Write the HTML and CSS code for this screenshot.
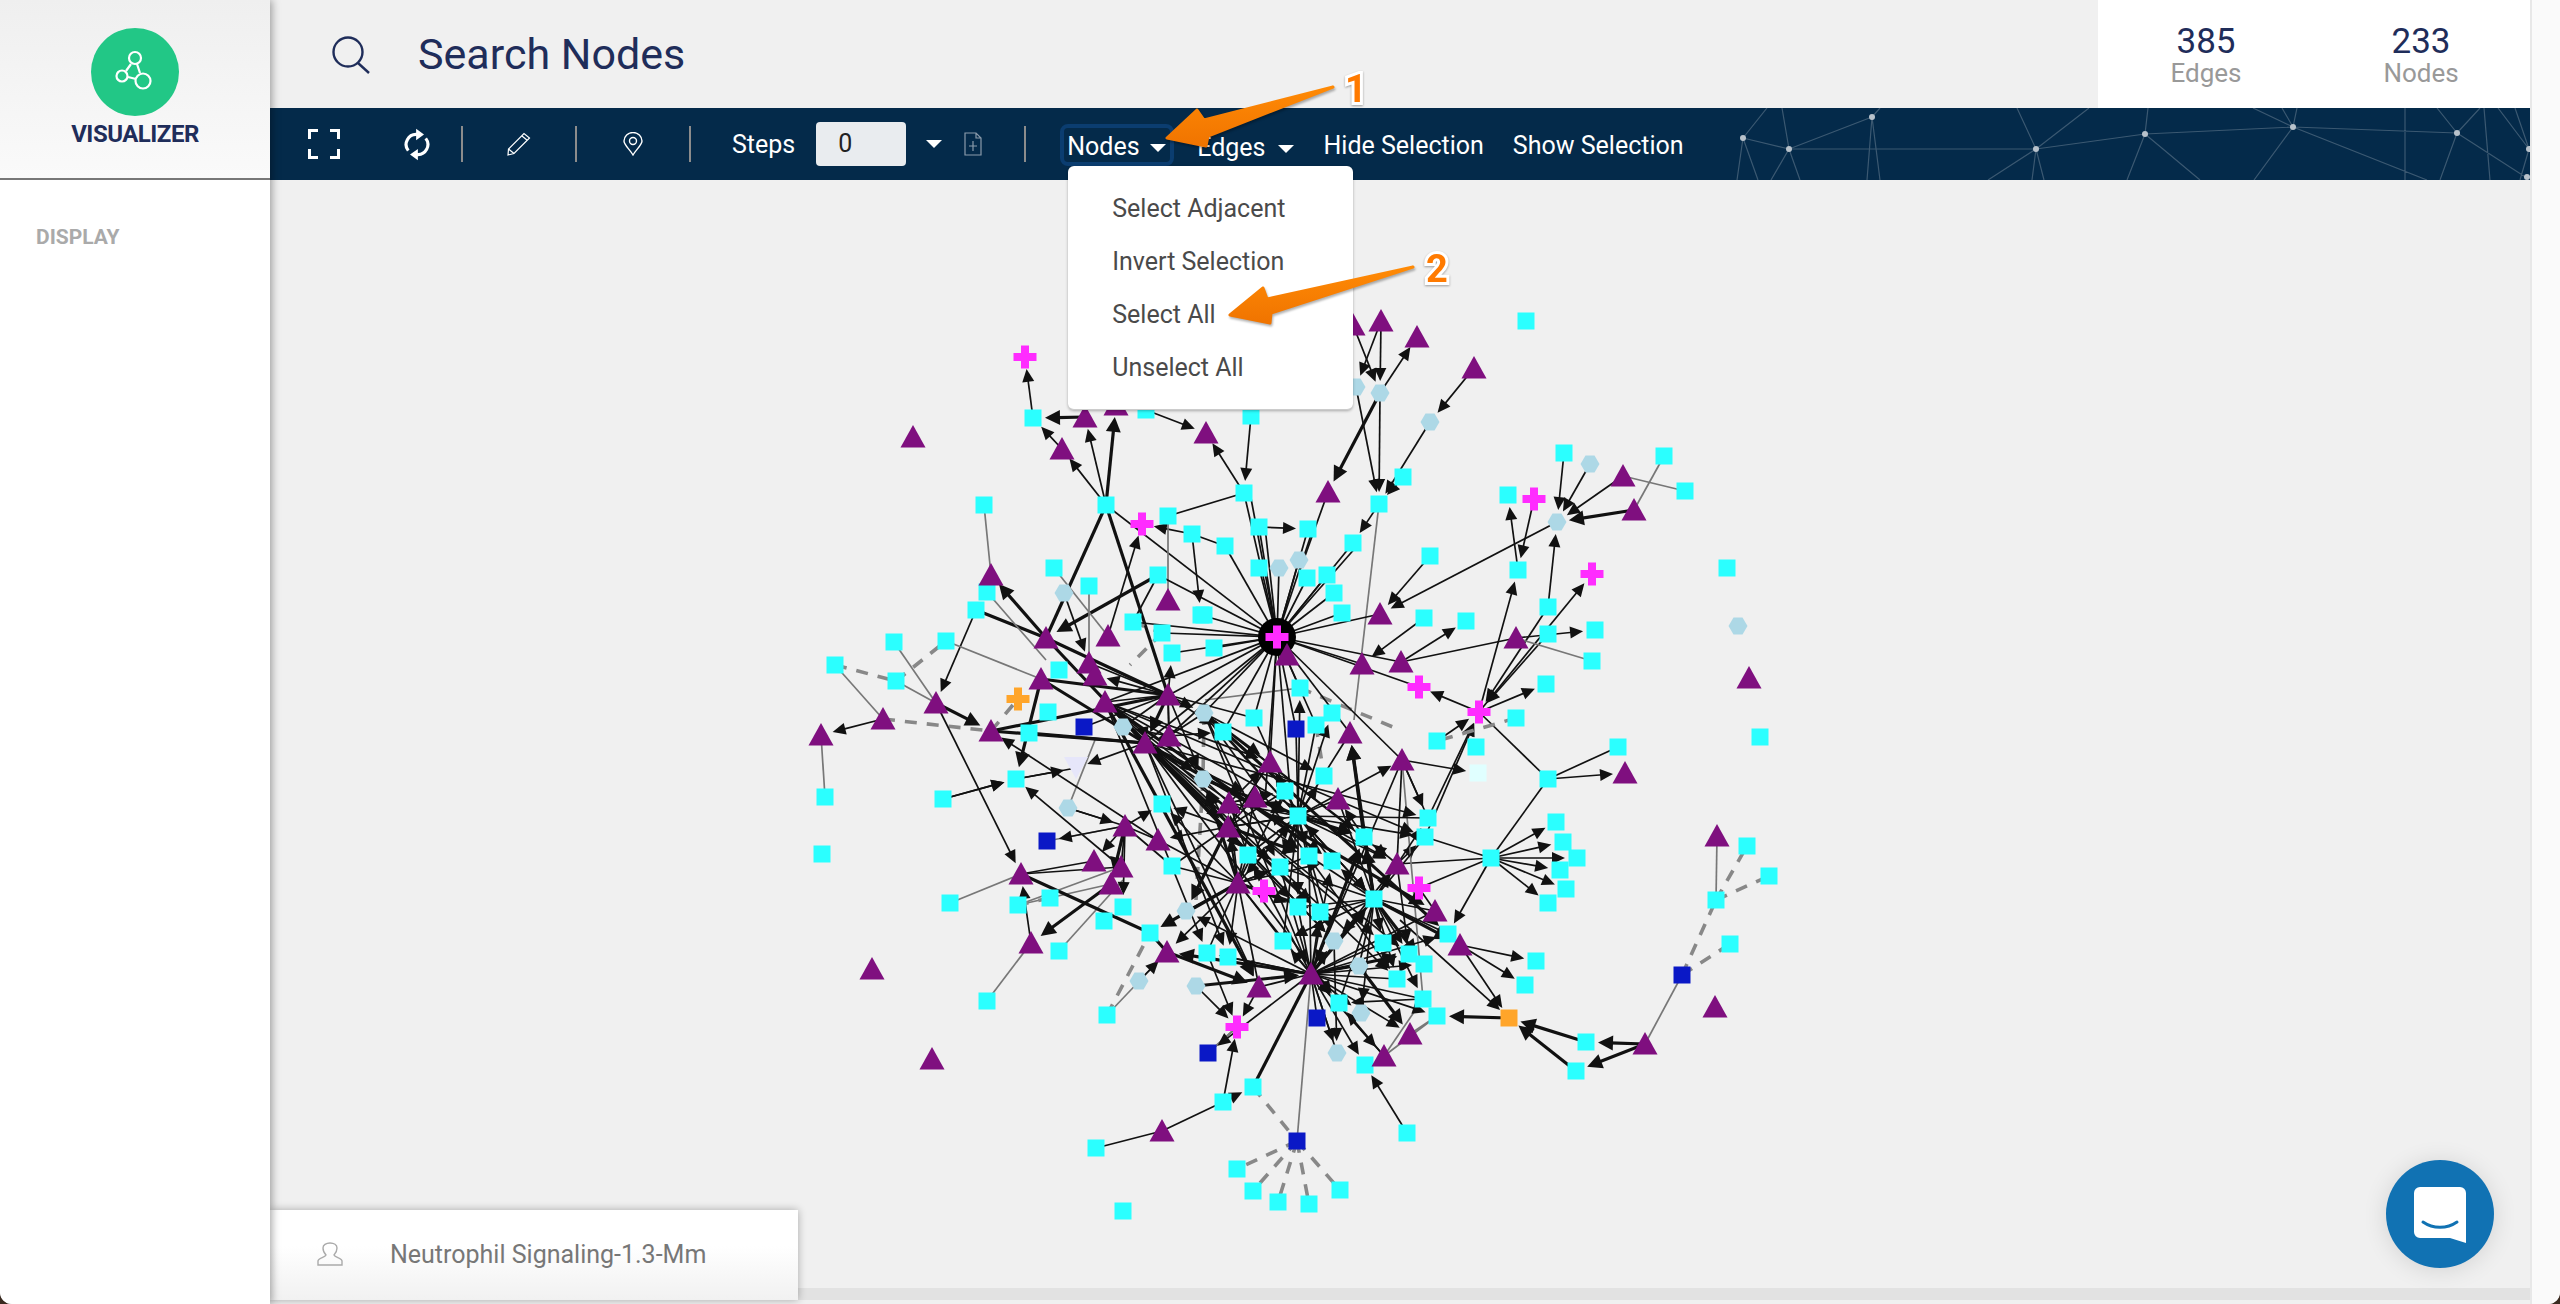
FILE: index.html
```html
<!doctype html>
<html lang="en">
<head>
    <meta charset="utf-8">
    <title>Visualizer</title>
    <link rel="stylesheet" href="styles.css">
</head>
<body>
    <div class="app">
        <aside class="sidebar">
            <div class="brand">
                <div class="brand-logo">
                    <svg viewBox="0 0 88 88" width="88" height="88">
                        <g fill="none" stroke="#fff" stroke-width="2.2">
                            <circle cx="44" cy="30" r="6"/>
                            <circle cx="31" cy="48" r="5.5"/>
                            <circle cx="52" cy="53" r="7.5"/>
                            <path d="M40 36l-5 7M46 36l3 9M37 49l8 2"/>
                        </g>
                    </svg>
                </div>
                <div class="brand-name">VISUALIZER</div>
            </div>
            <div class="side-title">DISPLAY</div>
        </aside>

        <main class="main">
            <header class="topbar">
                <svg class="search-icon" viewBox="0 0 40 38" width="40" height="38">
                    <circle cx="16" cy="16" r="14.5" fill="none" stroke="#1f2d5a" stroke-width="2.4"/>
                    <path d="M26 27l11 10" stroke="#1f2d5a" stroke-width="2.4"/>
                </svg>
                <div class="search-label">Search Nodes</div>
                <div class="stats">
                    <div class="stat"><span class="stat-num">385</span><span class="stat-name">Edges</span></div>
                    <div class="stat"><span class="stat-num">233</span><span class="stat-name">Nodes</span></div>
                </div>
            </header>

            <nav class="toolbar">
                <svg class="toolbar-bg" viewBox="1730 108 800 72" width="800" height="72">
                    <path fill="none" stroke="#fff" stroke-opacity=".22" stroke-width="1.2" d="M1743 138L1789 149M1789 149L1872 117M1789 149H2036M2036 149L2145 134M2145 134L2293 127M2293 127L2457 133M2293 127L2427 180M2457 133L2527 178M1743 138L1737 180M1743 138L1758 180M1743 138L1767 108M1789 149L1771 180M1789 149L1800 180M1789 149L1782 108M1872 117L1867 180M1872 117L1880 180M1872 117L1880 108M2036 149L1988 180M2036 149L2032 180M2036 149L2044 180M2036 149L2017 108M2036 149L2089 108M2145 134L2127 180M2145 134L2200 180M2145 134L2148 108M2293 127L2254 180M2293 127L2282 108M2293 127L2253 108M2293 127L2297 108M2457 133L2440 180M2457 133L2437 108M2457 133L2480 108M2405 108V180M2484 108L2490 180M2529 149L2498 108M2529 149L2515 108M2529 149L2520 180"/>
                    <g fill="#b8c2cb">
                        <circle cx="1743" cy="138" r="3"/><circle cx="1789" cy="149" r="3"/>
                        <circle cx="1872" cy="117" r="3"/><circle cx="2036" cy="149" r="3"/>
                        <circle cx="2145" cy="134" r="3"/><circle cx="2293" cy="127" r="3"/>
                        <circle cx="2457" cy="133" r="3"/><circle cx="2529" cy="149" r="3"/>
                        <circle cx="2527" cy="177" r="3"/>
                    </g>
                </svg>

                <svg class="tool tool-full" viewBox="0 0 32 30" width="32" height="30">
                    <path fill="none" stroke="#fff" stroke-width="3" d="M10 1.5H1.5V10M22 1.5H30.500V10M1.500 20V28.500H10M30.500 20V28.500H22"/>
                </svg>
                <svg class="tool tool-refresh" viewBox="0 0 32 36" width="28" height="33">
                    <path fill="none" stroke="#fff" stroke-width="3.6" d="M6 25A11.500 11.500 0 0 1 16 6.500M26 11A11.500 11.500 0 0 1 16 29.500"/>
                    <path fill="#fff" d="M15 0l9 6.500-9 6.500zM17 23l-9 6.500 9 6.500z"/>
                </svg>
                <span class="sep sep-a"></span>
                <svg class="tool tool-pencil" viewBox="0 0 24 24" width="24" height="24">
                    <path fill="none" stroke="#fff" stroke-width="1.200" d="M1 23l.5-6L17 1.500 22.500 6 7 21.500zM15 4l5.500 4.500M1.500 17L7 21.500"/>
                </svg>
                <span class="sep sep-b"></span>
                <svg class="tool tool-pin" viewBox="0 0 20 24" width="20" height="24">
                    <path fill="none" stroke="#fff" stroke-width="1.400" d="M10 23C6.500 17 1 13 1 9a9 8.500 0 0 1 18 0c0 4-5.500 8-9 14z"/>
                    <circle cx="10" cy="9" r="3.500" fill="none" stroke="#fff" stroke-width="1.400"/>
                </svg>
                <span class="sep sep-c"></span>

                <span class="tool-text steps-label">Steps</span>
                <div class="steps-input">0</div>
                <span class="caret caret-steps"></span>
                <svg class="tool tool-doc" viewBox="0 0 18 24" width="18" height="24">
                    <path fill="none" stroke="#8b9bab" stroke-width="1.200" d="M1 1h11l5 5v17H1zM12 1v5h5M9 9v10M5 14h8"/>
                </svg>
                <span class="sep sep-d"></span>

                <div class="dropdown">
                    <button class="drop-btn">Nodes<span class="caret"></span></button>
                    <ul class="menu">
                        <li>Select Adjacent</li>
                        <li>Invert Selection</li>
                        <li>Select All</li>
                        <li>Unselect All</li>
                    </ul>
                </div>
                <span class="tool-text edges-label">Edges<span class="caret"></span></span>
                <span class="tool-text hide-label">Hide Selection</span>
                <span class="tool-text show-label">Show Selection</span>
            </nav>

            <section class="canvas">
                <svg id="graph" class="graph" viewBox="270 180 2260 1108" width="2260" height="1108"></svg>
                <div class="network-name">
                    <svg viewBox="0 0 26 24" width="26" height="24">
                        <path fill="none" stroke="#aaa" stroke-width="1.400" d="M1 23v-4c0-3 7-3.500 8-6-2-2-3-4-3-7 0-3 3-5 7-5s7 2 7 5c0 3-1 5-3 7 1 2.500 8 3 8 6v4z"/>
                    </svg>
                    <span>Neutrophil Signaling-1.3-Mm</span>
                </div>
                <div class="scroll-strip"></div>
                <div class="chat-btn">
                    <svg viewBox="0 0 52 56" width="52" height="56">
                        <path fill="#fff" d="M6 0h40a6 6 0 0 1 6 6v50l-16-5H6a6 6 0 0 1-6-6V6a6 6 0 0 1 6-6z"/>
                        <path fill="none" stroke="#1172b3" stroke-width="3" stroke-linecap="round" d="M9 35c10 7 24 7 34 0"/>
                    </svg>
                </div>
            </section>
        </main>
        <div class="right-strip"></div>
    </div>

    <svg class="callouts" viewBox="0 0 2560 1304" width="2560" height="1304">
        <defs>
            <linearGradient id="orange" x1="0" y1="0" x2="0" y2="1">
                <stop offset="0" stop-color="#ff8a05"/>
                <stop offset="1" stop-color="#f07400"/>
            </linearGradient>
        </defs>
        <path class="callout-arrow" d="M1333 87L1204 120 1197 110 1167 138 1206 146 1208 136z"/>
        <path class="callout-arrow" d="M1413 267L1267 299 1263 288 1230 315 1270 323 1271 313z"/>
        <text class="callout-num" x="1356" y="102">1</text>
        <text class="callout-num" x="1437" y="282">2</text>
    </svg>

    <script src="graph.js"></script>
</body>
</html>
```

FILE: styles.css
```css
* {
    box-sizing: border-box;
}

html, body {
    margin: 0;
    height: 100%;
    overflow: hidden;
}

body {
    width: 2560px;
    height: 1304px;
    background-color: #3a2a20;
    font-family: Roboto, 'Noto Sans', sans-serif;
}

.app {
    display: flex;
    width: 2560px;
    height: 1304px;
    background-color: #f0f0f0;
    border-radius: 0 0 12px 12px;
    overflow: hidden;
}

/* sidebar */
.sidebar {
    flex: none;
    width: 270px;
    background-color: #fff;
    box-shadow: 2px 0 8px rgba(0, 0, 0, .35);
    z-index: 3;
}

.brand {
    display: flex;
    flex-direction: column;
    align-items: center;
    height: 180px;
    padding-top: 28px;
    background: linear-gradient(#efefef, #fafafa);
    border-bottom: 2px solid #777;
}

.brand-logo {
    width: 88px;
    height: 88px;
    border-radius: 50%;
    background-color: #22c786;
}

.brand-name {
    margin-top: 4px;
    color: #1f2d5a;
    font-size: 24px;
    font-weight: 700;
    line-height: 28px;
    letter-spacing: -.5px;
}

.side-title {
    padding: 45px 0 0 36px;
    color: #aaa;
    font-size: 21px;
    font-weight: 700;
    line-height: 24px;
}

/* main column */
.main {
    display: flex;
    flex: none;
    flex-direction: column;
    width: 2260px;
}

.topbar {
    display: flex;
    flex: none;
    align-items: center;
    height: 108px;
    padding-left: 62px;
}

.search-icon {
    flex: none;
    margin-top: 2px;
}

.search-label {
    margin-left: 46px;
    color: #1f2d5a;
    font-size: 43px;
}

.stats {
    display: flex;
    justify-content: space-between;
    width: 432px;
    height: 108px;
    margin-left: auto;
    padding: 0 44px 0 43px;
    background-color: #fff;
}

.stat {
    display: flex;
    flex-direction: column;
    align-items: center;
    width: 130px;
    padding-top: 26px;
}

.stat-num {
    color: #1f2d5a;
    font-size: 35px;
    line-height: 32px;
}

.stat-name {
    color: #999;
    font-size: 26px;
    line-height: 30px;
}

/* toolbar */
.toolbar {
    display: flex;
    position: relative;
    flex: none;
    align-items: center;
    height: 72px;
    padding-left: 38px;
    background-color: #042a4a;
    color: #fff;
    z-index: 2;
}

.toolbar-bg {
    position: absolute;
    top: 0;
    right: 0;
}

.tool {
    flex: none;
}

.tool-refresh { margin-left: 63px; }
.tool-pencil { margin-left: 44px; }
.tool-pin { margin-left: 46px; }
.tool-doc { margin-left: 22px; }

.sep {
    flex: none;
    width: 2px;
    height: 36px;
    background-color: #8c8c8c;
}

.sep-a { margin-left: 30px; }
.sep-b { margin-left: 44px; }
.sep-c { margin-left: 46px; }
.sep-d { margin-left: 42px; }

.tool-text {
    font-size: 25px;
    white-space: nowrap;
}

.steps-label { margin-left: 41px; }

.steps-input {
    flex: none;
    width: 90px;
    height: 44px;
    margin-left: 21px;
    padding-left: 22px;
    background-color: #e9ecef;
    border-radius: 4px;
    color: #222;
    font-size: 25px;
    line-height: 44px;
}

.caret {
    display: inline-block;
    width: 0;
    height: 0;
    margin-left: 12px;
    border-top: 8px solid #fff;
    border-left: 8px solid transparent;
    border-right: 8px solid transparent;
    vertical-align: 3px;
}

.caret-steps { margin-left: 20px; }

.dropdown {
    position: relative;
    flex: none;
    margin: 2px 0 0 34px;
}

.drop-btn {
    display: block;
    width: 114px;
    height: 42px;
    padding: 4px 0 0 3px;
    background: none;
    border: 4px solid #0b3d70;
    border-radius: 8px;
    color: #fff;
    font-family: inherit;
    font-size: 25px;
    line-height: 30px;
    text-align: left;
    white-space: nowrap;
}

.drop-btn .caret {
    margin-left: 10px;
}

.menu {
    position: absolute;
    top: 100%;
    left: 8px;
    width: 285px;
    margin: 0;
    padding: 16px 0 15px;
    background-color: #fff;
    border-bottom: 1px solid #ccc;
    border-radius: 6px;
    box-shadow: 0 1px 3px rgba(0, 0, 0, .3);
    color: #4a4a4a;
    font-size: 25px;
    list-style: none;
}

.menu li {
    height: 53px;
    padding-left: 44px;
    line-height: 53px;
}

.edges-label {
    margin: 6px 0 0 23px;
}

.hide-label { margin: 2px 0 0 30px; }
.show-label { margin: 2px 0 0 29px; }

/* graph canvas */
.canvas {
    position: relative;
    flex: 1;
}

.graph {
    display: block;
    filter: blur(.7px);
}

.network-name {
    display: flex;
    position: absolute;
    left: 0;
    bottom: 4px;
    align-items: center;
    width: 528px;
    height: 90px;
    padding: 0 0 2px 47px;
    background: linear-gradient(#fff 40%, #f1f1f1);
    box-shadow: 0 0 8px rgba(0, 0, 0, .3);
    color: #777;
    font-size: 25px;
    z-index: 1;
}

.network-name span {
    margin-left: 47px;
}

.scroll-strip {
    position: absolute;
    left: 0;
    right: 0;
    bottom: 4px;
    height: 12px;
    background-color: #e2e2e2;
}

.chat-btn {
    display: flex;
    position: absolute;
    top: 980px;
    left: 2116px;
    align-items: center;
    justify-content: center;
    width: 108px;
    height: 108px;
    padding-top: 2px;
    background-color: #1172b3;
    border-radius: 50%;
    box-shadow: 0 2px 24px rgba(0, 0, 0, .12);
}

.right-strip {
    flex: 1;
    background-color: #fafafa;
    border-left: 2px solid #e8e8e8;
}

/* orange annotations drawn over the screenshot */
.callouts {
    position: absolute;
    top: 0;
    left: 0;
    z-index: 5;
    pointer-events: none;
}

.callout-arrow {
    fill: url(#orange);
    stroke: url(#orange);
    stroke-width: 3;
    stroke-linejoin: round;
    filter: drop-shadow(1px 2px 1px rgba(0, 0, 0, .3));
}

.callout-num {
    fill: #ff7a00;
    stroke: #fff;
    stroke-width: 6;
    paint-order: stroke;
    font-family: Roboto, sans-serif;
    font-size: 38px;
    font-weight: 700;
    text-anchor: middle;
    filter: drop-shadow(0 1px 1px rgba(0, 0, 0, .35));
}
```

FILE: graph.js
```js
// network drawn in page coordinates, same as the viewBox of #graph
var squares = [
    [1033,418],[1146,410],[1251,416],[1244,493],[1106,505],[984,505],[1168,516],[1192,534],[1225,546],[1259,527],
    [1259,568],[1054,568],[1089,586],[1158,575],[987,592],[976,610],[1201,615],[1133,622],[1162,633],[1172,653],
    [1214,648],[1059,670],[894,642],[946,641],[835,665],[896,681],[1048,712],[1526,321],[1403,477],[1379,504],
    [1308,529],[1353,543],[1430,556],[1307,578],[1327,575],[1334,593],[1342,613],[1424,618],[1466,621],[1564,453],
    [1664,456],[1685,491],[1508,495],[1518,570],[1548,607],[1548,634],[1595,630],[1592,661],[1546,684],[1727,568],
    [1300,688],[1204,615],[1254,718],[1332,713],[1516,718],[825,797],[822,854],[943,799],[1016,779],[1029,733],
    [1223,732],[1162,804],[1285,791],[1298,816],[1248,855],[1280,867],[1172,866],[950,903],[1018,905],[1050,898],
    [1123,907],[1104,921],[1150,933],[1059,951],[987,1001],[1107,1015],[1207,953],[1228,957],[1283,941],[1298,907],
    [1253,1087],[1223,1102],[1316,725],[1437,741],[1476,747],[1618,747],[1760,737],[1548,779],[1324,776],[1428,818],
    [1425,837],[1364,837],[1556,822],[1563,842],[1577,858],[1560,870],[1566,889],[1548,903],[1491,858],[1309,856],
    [1332,861],[1374,899],[1320,912],[1383,943],[1448,934],[1409,954],[1424,964],[1397,979],[1536,961],[1525,985],
    [1339,1003],[1423,999],[1437,1016],[1365,1065],[1586,1042],[1576,1071],[1747,846],[1769,876],[1716,900],[1730,944],
    [1407,1133],[1237,1169],[1253,1191],[1278,1202],[1309,1204],[1340,1190],[1096,1148],[1123,1211]
];
var triangles = [
    [913,437],[1085,417],[1116,405],[1062,449],[1206,433],[991,575],[1046,638],[1108,636],[1168,600],[1089,663],
    [1095,675],[1041,679],[936,703],[1105,702],[1168,695],[883,719],[1287,655],[1381,321],[1417,337],[1474,368],
    [1353,325],[1328,492],[1623,476],[1634,510],[1380,614],[1516,638],[1401,662],[1362,664],[1749,678],[821,735],
    [991,731],[1145,743],[1169,736],[1270,762],[1229,803],[1255,797],[1125,826],[1228,827],[1158,840],[1094,861],
    [1121,867],[1021,874],[1111,884],[1238,883],[1031,943],[1167,952],[1259,987],[872,969],[932,1059],[1350,733],
    [1402,760],[1338,799],[1625,773],[1397,864],[1435,911],[1460,945],[1311,974],[1410,1034],[1384,1056],[1645,1044],
    [1717,836],[1715,1007],[1162,1131]
];
var hexes = [
    [1064,593],[1279,568],[1299,560],[1204,713],[1380,393],[1356,387],[1430,422],[1590,464],[1557,522],[1738,626],
    [1123,727],[1203,779],[1068,808],[1186,911],[1139,981],[1196,986],[1334,941],[1359,966],[1361,1013],[1337,1053]
];
var pluses = [[1025,357],[1142,524],[1534,499],[1592,574],[1419,687],[1479,712],[1264,891],[1419,888],[1237,1027]];
var blues = [[1084,727],[1296,729],[1047,841],[1208,1053],[1317,1018],[1682,975],[1297,1141]];

// a thin arrow, A thick arrow, l thin line, T thick line, g grey line, d dashed
var edges = [
    'a 1033 418 1025 357','A 1085 417 1033 418','a 1062 449 1033 418','a 1106 505 1062 449','a 1106 505 1085 417',
    'A 1106 505 1116 405','a 1146 410 1206 433','a 1244 493 1206 433','a 1251 416 1244 493','l 1244 493 1168 516',
    'l 1225 546 1192 534','a 1192 534 1142 524','l 1106 505 1277 637','g 984 505 991 575','T 1106 505 1046 638',
    'T 1106 505 1168 695','a 1108 636 1142 524','A 1158 575 1046 638','l 1158 575 1133 622','g 1168 516 1168 600',
    'a 1192 534 1201 615','g 1054 568 1108 636','a 1064 593 1089 663','g 1089 586 1089 663','A 1046 638 991 575',
    'T 976 610 1046 638','a 976 610 936 703','g 987 592 1046 660','g 894 642 936 703','g 946 641 1041 679',
    'g 835 665 883 719','g 896 681 936 703','d 835 665 896 681','d 896 681 946 641','A 936 703 991 731',
    'a 883 719 821 735','d 883 719 991 731','g 821 735 825 797','a 936 703 1021 874','d 991 731 1018 699',
    'A 1041 679 1016 779','a 943 799 1016 779','l 1016 779 1076 768','a 1145 743 1076 768','g 1068 808 1095 740',
    'T 991 731 1145 743','T 991 731 1168 695','T 1041 679 1168 695','T 1029 733 1145 743','T 1046 638 1168 695',
    'T 1046 638 1145 743','T 1041 679 1145 743','a 1121 867 1016 779','a 1158 840 991 731','a 1068 808 1125 826',
    'g 1047 841 1125 826','g 950 903 1021 874','l 1021 874 1094 861','l 1021 874 1121 867','g 1018 905 1111 884',
    'g 1018 905 1121 867','a 1031 943 1021 874','A 1111 884 1031 943','g 1059 951 1123 880','g 987 1001 1031 943',
    'T 1021 874 1150 933','T 1150 933 1167 952','A 1167 952 1259 987','g 1107 1015 1167 952','d 1107 1015 1150 933',
    'a 1139 981 1167 952','a 1196 986 1237 1027','a 1210 960 1237 1027','a 1259 987 1237 1027','a 1223 1102 1237 1027',
    'g 1208 1053 1237 1027','T 1253 1087 1311 974','l 1223 1102 1162 1131','l 1162 1131 1096 1148','a 1223 1102 1253 1087',
    'd 1253 1087 1297 1141','g 1297 1141 1311 974','d 1297 1141 1237 1169','d 1297 1141 1253 1191','d 1297 1141 1278 1202',
    'd 1297 1141 1309 1204','d 1297 1141 1340 1190','A 1645 1044 1586 1042','A 1645 1044 1576 1071','A 1586 1042 1509 1018',
    'A 1576 1071 1509 1018','A 1509 1018 1437 1016','g 1645 1044 1682 975','d 1682 975 1716 900','d 1716 900 1747 846',
    'd 1716 900 1769 876','d 1682 975 1730 944','g 1717 836 1716 900','a 1460 945 1536 961','a 1460 945 1525 985',
    'a 1460 945 1509 1018','a 1400 920 1509 1018','a 1407 1133 1365 1065','g 1437 1016 1384 1056','g 1410 1034 1437 1016',
    'a 1491 858 1556 822','a 1491 858 1563 842','a 1491 858 1577 858','a 1491 858 1560 870','a 1491 858 1566 889',
    'a 1491 858 1548 903','a 1491 858 1448 934','l 1548 779 1491 858','l 1548 779 1618 747','a 1548 779 1625 773',
    'l 1548 779 1479 712','l 1397 864 1491 858','l 1425 837 1491 858','l 1419 888 1491 858','a 1402 760 1478 773',
    'l 1402 760 1397 864','a 1402 760 1428 818','A 1364 837 1350 733','a 1364 837 1338 799','a 1397 864 1364 837',
    'a 1397 864 1425 837','a 1397 864 1409 954','l 1419 888 1435 911','a 1428 818 1479 712','a 1425 837 1479 712',
    'a 1437 741 1479 712','d 1516 718 1437 741','a 1479 712 1518 570','a 1548 607 1479 712','a 1548 634 1479 712',
    'a 1479 712 1546 684','a 1479 712 1592 574','a 1479 712 1419 687','l 1516 638 1401 662','a 1516 638 1595 630',
    'g 1516 638 1592 661','a 1401 662 1466 621','a 1424 618 1362 664','l 1401 662 1277 637','a 1430 556 1380 614',
    'a 1518 570 1508 495','a 1534 499 1518 570','a 1548 607 1557 522','a 1557 522 1380 614','a 1564 453 1557 522',
    'a 1590 464 1557 522','a 1623 476 1557 522','A 1634 510 1557 522','g 1634 510 1664 456','g 1623 476 1685 491',
    'A 1380 393 1328 492','a 1356 387 1379 504','a 1380 393 1379 504','a 1474 368 1430 422','a 1430 422 1379 504',
    'a 1403 477 1379 504','a 1381 321 1380 393','a 1381 321 1356 387','a 1380 393 1417 337','a 1353 325 1380 393',
    'a 1379 504 1353 543','g 1379 504 1354 720','l 1328 492 1300 570','a 1259 527 1308 529','g 1300 688 1205 700',
    'd 1300 688 1400 730','d 1316 725 1324 776','d 1203 779 1196 900','d 1133 622 1162 633','d 1162 633 1130 665',
    'd 1204 713 1223 732','d 1204 713 1203 779','g 1208 1053 1237 1027','d 1050 898 1018 905','a 943 799 1016 779',
    'a 1016 779 1076 768','A 1311 974 1374 899','A 1374 899 1350 733','l 1402 760 1428 818','a 1402 760 1311 974',
    'A 1359 966 1410 1034','a 1334 941 1337 1053','a 1311 974 1384 1056','a 1311 974 1365 1065','a 1311 974 1337 1053',
    'a 1423 999 1339 1003','g 1423 999 1384 1056','g 1423 999 1402 760','a 1384 1056 1339 1003','l 1448 934 1460 945'
];

// the spokes of the big hub, their arrowheads disappear in the black ring
var hub = [
    [1244,493],[1250,493],[1259,527],[1265,527],[1225,546],[1259,568],[1279,568],[1299,560],[1307,578],[1327,575],
    [1334,593],[1342,613],[1308,529],[1313,529],[1353,543],[1357,546],[1380,614],[1201,615],[1133,622],[1162,633],
    [1172,653],[1214,648],[1158,575],[1204,713],[1169,695],[1105,702],[1145,743],[1169,736],[1223,732],[1254,718],
    [1296,729],[1270,762],[1316,725],[1350,733],[1300,688],[1362,664],[1419,687],[1402,760],[1265,800],[1290,790]
];

// dense middle of the network, each of these connects to its neighbours: x, y, reach
var clusters = [
    [1298,816,135],[1311,974,150],[1374,899,125],[1238,883,110],[1125,826,85],[1168,695,95],[1228,827,95],[1169,736,60],[1229,803,60]
];
// long diagonals, only towards what lies below and right of them
var diagonals = [[1105,702,330],[1145,743,320],[1204,713,300]];

var NS = 'http://www.w3.org/2000/svg';
var svg = document.getElementById('graph');

function add(tag, attrs) {
    var el = document.createElementNS(NS, tag);
    for (var k in attrs) el.setAttribute(k, attrs[k]);
    svg.appendChild(el);
    return el;
}

function drawEdge(kind, x1, y1, x2, y2) {
    var dx = x2 - x1, dy = y2 - y1;
    var len = Math.sqrt(dx * dx + dy * dy) || 1;
    var ux = dx / len, uy = dy / len;
    var arrow = kind === 'a' || kind === 'A';
    var thick = kind === 'A' || kind === 'T';
    var head = kind === 'A' ? 15 : 13;
    var half = kind === 'A' ? 7.5 : 6;
    var tip = arrow ? 12 : 0;
    var ex = x2 - ux * (tip + head * .8), ey = y2 - uy * (tip + head * .8);
    var color = kind === 'g' ? '#777' : kind === 'd' ? '#888' : '#111';
    add('line', {
        x1: x1, y1: y1, x2: arrow ? ex : x2, y2: arrow ? ey : y2,
        stroke: color,
        'stroke-width': thick ? 3.2 : kind === 'd' ? 3.6 : 1.7,
        'stroke-dasharray': kind === 'd' ? '12 10' : 'none'
    });
    if (arrow) {
        var tx = x2 - ux * tip, ty = y2 - uy * tip;
        var bx = tx - ux * head, by = ty - uy * head;
        add('polygon', {
            points: tx + ',' + ty + ' ' + (bx - uy * half) + ',' + (by + ux * half) + ' ' + (bx + uy * half) + ',' + (by - ux * half),
            fill: '#111'
        });
    }
}

edges.forEach(function (e) {
    var p = e.split(' ');
    drawEdge(p[0], +p[1], +p[2], +p[3], +p[4]);
});

hub.forEach(function (t) {
    drawEdge('l', t[0], t[1], 1277, 637);
});

var inner = squares.concat(triangles, hexes, blues);
clusters.forEach(function (c) {
    var n = 0;
    inner.forEach(function (t) {
        var d = Math.sqrt(Math.pow(t[0] - c[0], 2) + Math.pow(t[1] - c[1], 2));
        if (d < 8 || d > c[2] || t[0] < 1040 || t[0] > 1470 || t[1] < 650 || t[1] > 1060) return;
        n++;
        var kind = n % 7 === 0 ? 'A' : n % 2 ? 'a' : 'l';
        if (n % 4 === 0) drawEdge(kind, t[0], t[1], c[0], c[1]);
        else drawEdge(kind, c[0], c[1], t[0], t[1]);
    });
});

diagonals.forEach(function (c) {
    var n = 0;
    inner.forEach(function (t) {
        var dx = t[0] - c[0], dy = t[1] - c[1];
        if (dx < 60 || dy < 40 || dx > c[2] || dy > c[2] || t[0] > 1470 || t[1] > 1010) return;
        n++;
        if (n % 3 === 0) drawEdge(n % 5 === 0 ? 'A' : 'a', c[0], c[1], t[0], t[1]);
    });
});

add('circle', {cx: 1277, cy: 637, r: 19, fill: '#000'});

squares.forEach(function (p) {
    add('rect', {x: p[0] - 8.5, y: p[1] - 8.5, width: 17, height: 17, fill: '#2bffff'});
});
hexes.forEach(function (p) {
    var x = p[0], y = p[1];
    add('polygon', {
        points: [x - 9.5, y, x - 4.5, y - 8.5, x + 4.5, y - 8.5, x + 9.5, y, x + 4.5, y + 8.5, x - 4.5, y + 8.5].join(','),
        fill: '#add8e6'
    });
});
blues.forEach(function (p) {
    add('rect', {x: p[0] - 8.5, y: p[1] - 8.5, width: 17, height: 17, fill: '#0a18c6'});
});
add('rect', {x: 1500.5, y: 1009.5, width: 17, height: 17, fill: '#ffa52a'});
add('rect', {x: 1469.5, y: 764.5, width: 17, height: 17, fill: '#e0ffff'});
triangles.forEach(function (p) {
    var x = p[0], y = p[1];
    add('polygon', {
        points: [x, y - 12, x + 12.5, y + 10.5, x - 12.5, y + 10.5].join(','),
        fill: '#7f0f7f'
    });
});
add('polygon', {points: '1064,757 1088,757 1076,779', fill: '#e6e6fa'});

function drawPlus(p, color) {
    var x = p[0], y = p[1];
    add('path', {
        d: 'M' + (x - 4) + ' ' + (y - 11.5) + 'h8v7.5h7.500v8h-7.500v7.500h-8v-7.500h-7.500v-8h7.500z',
        fill: color
    });
}
pluses.concat([[1277, 637]]).forEach(function (p) {
    drawPlus(p, '#ff2cff');
});
drawPlus([1018, 699], '#ffa52a');
```
